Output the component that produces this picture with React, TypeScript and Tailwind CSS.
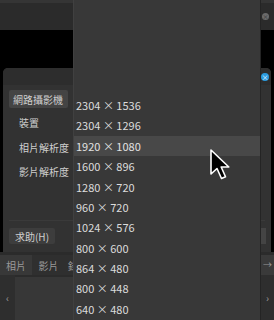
import React from 'react'

const resolutions = [
  '2304 × 1536',
  '2304 × 1296',
  '1920 × 1080',
  '1600 × 896',
  '1280 × 720',
  '960 × 720',
  '1024 × 576',
  '800 × 600',
  '864 × 480',
  '800 × 448',
  '640 × 480',
]

const App = () => {
  return (
    <div className="relative w-[274px] h-[320px] overflow-hidden bg-black font-['Noto_Sans_CJK_TC',sans-serif] text-[#cfcfcf]">
      {/* background window */}
      <div className="flex flex-col h-full">
        <div className="h-[30px] bg-[#2b2b2b] border-t-[3px] border-[#353535] flex justify-end items-center pr-[5px]">
          <div className="w-[7px] h-[7px] rounded-full bg-[#6a6a6a] text-[6px] leading-[7px] text-center text-[#333]">×</div>
        </div>
        <div className="h-[38px] bg-black" />

        {/* dialog */}
        <div className="mx-[3px] h-[184px] rounded-t-[5px] bg-[#323232] flex flex-col">
          <div className="h-[17px] bg-[#2d2d2d] rounded-t-[5px] flex justify-end items-center pr-[2px]">
            <div className="w-[8px] h-[8px] rounded-full bg-[#2a9bdf] text-[7px] leading-[8px] text-center text-white">×</div>
          </div>
          <div className="flex-1 flex flex-col px-[6px] pt-[5px]">
            <div className="flex-1 text-[10px]">
              <div className="w-[59px] h-[18px] bg-[#444444] rounded-[2px] flex items-center pl-[4px] mb-[4px]">網路攝影機</div>
              <div className="h-[20px] flex items-center pl-[10px]">裝置</div>
              <div className="h-[24px] flex items-center pl-[10px] mt-[3px]">相片解析度</div>
              <div className="h-[24px] flex items-center pl-[10px]">影片解析度</div>
            </div>
            <div className="border-t border-[#3a3a3a] flex justify-between items-start pt-[7px] h-[32px]">
              <div className="w-[46px] h-[16px] bg-[#3d3d3d] rounded-[2px] text-[10px] flex items-center justify-center">求助(H)</div>
              <div className="w-[5px] h-[16px] bg-[#444444] mr-[-1px]" />
            </div>
          </div>
        </div>

        {/* bottom area */}
        <div className="flex-1 bg-[#2b2b2b] flex flex-col pt-[3px]">
          <div className="h-[20px] flex text-[10px] text-[#9a9a9a]">
            <div className="w-[32px] bg-[#383838] flex items-center justify-center">相片</div>
            <div className="w-[33px] bg-[#2f2f2f] flex items-center justify-center">影片</div>
            <div className="w-[20px] bg-[#2f2f2f] flex items-center pl-[3px]">錄</div>
            <div className="flex-1" />
            <div className="w-[13px] bg-[#3a3a3a] flex items-center justify-center text-[9px] text-[#999]">→</div>
          </div>
          <div className="flex-1 flex">
            <div className="w-[15px] bg-[#2e2e2e] flex items-center justify-center text-[10px] text-[#9a9a9a]">‹</div>
            <div className="flex-1 bg-[#373737] mt-[2px]" />
            <div className="w-[13px] bg-[#2e2e2e] flex items-center justify-center text-[10px] text-[#9a9a9a]">›</div>
          </div>
        </div>
      </div>

      {/* dropdown menu */}
      <div className="absolute left-[73px] top-0 w-[188px] h-[320px] bg-[#383838] border-l border-[#404040] border-r border-r-[#242424] pt-[95px]">
        {resolutions.map((r) => (
          <div
            key={r}
            className={
              r === '1920 × 1080'
                ? 'h-[20.4px] flex items-center pl-[2px] text-[11px] text-[#e2e2e2] bg-[#484848]'
                : 'h-[20.4px] flex items-center pl-[2px] text-[11px] text-[#dcdcdc]'
            }
          >
            {r}
          </div>
        ))}
      </div>

      {/* mouse cursor */}
      <svg className="absolute left-[209px] top-[148px]" width="22" height="33" viewBox="0 0 22 33">
        <path
          d="M2 2 L2 26 L8 20.5 L12.5 30.5 L16.5 28.7 L12.2 19 L19.8 19 Z"
          fill="#000"
          stroke="#fff"
          strokeWidth="1.6"
          strokeLinejoin="round"
        />
      </svg>
    </div>
  )
}

export default App
